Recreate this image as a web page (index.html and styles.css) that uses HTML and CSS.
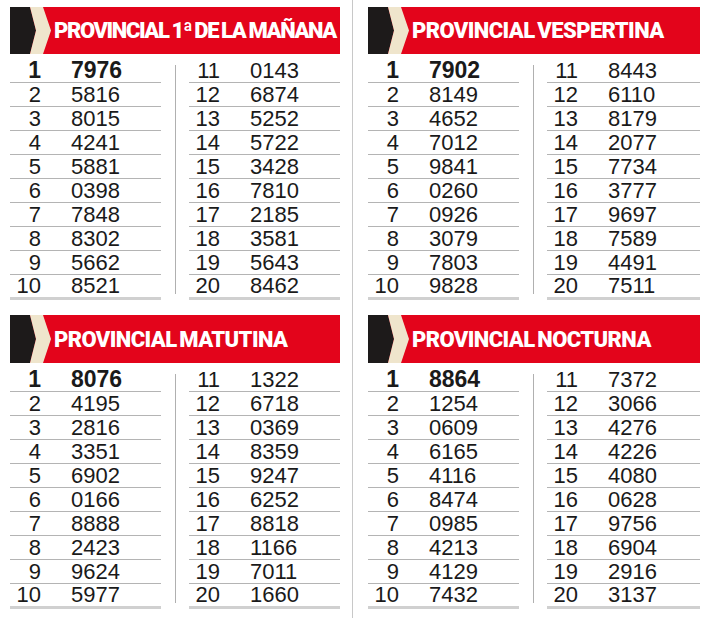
FILE: index.html
```html
<!DOCTYPE html>
<html lang="es">
<head>
<meta charset="utf-8">
<title>Quiniela Provincial</title>
<link rel="stylesheet" href="styles.css">
</head>
<body>
<div class="page">
  <div class="col col-left">
    <section class="panel">
      <div class="head">
        <svg class="chev" width="42" height="47" viewBox="0 0 42 47"><polygon points="0,0 20,0 26,23.5 20,47 0,47" fill="#1d1a1a"/><polygon points="20,0 33,0 41,23.5 33,47 20,47 26,23.5" fill="#efe5cc"/></svg>
        <h2 class="title title-tight">PROVINCIAL 1ª DE LA MAÑANA</h2>
      </div>
      <div class="table">
        <div class="sub sub-a">
          <div class="row first"><span class="rk">1</span><span class="nm">7976</span></div>
          <div class="row"><span class="rk">2</span><span class="nm">5816</span></div>
          <div class="row"><span class="rk">3</span><span class="nm">8015</span></div>
          <div class="row"><span class="rk">4</span><span class="nm">4241</span></div>
          <div class="row"><span class="rk">5</span><span class="nm">5881</span></div>
          <div class="row"><span class="rk">6</span><span class="nm">0398</span></div>
          <div class="row"><span class="rk">7</span><span class="nm">7848</span></div>
          <div class="row"><span class="rk">8</span><span class="nm">8302</span></div>
          <div class="row"><span class="rk">9</span><span class="nm">5662</span></div>
          <div class="row last"><span class="rk">10</span><span class="nm">8521</span></div>
        </div>
        <div class="vsep"></div>
        <div class="sub sub-b">
          <div class="row first"><span class="rk">11</span><span class="nm">0143</span></div>
          <div class="row"><span class="rk">12</span><span class="nm">6874</span></div>
          <div class="row"><span class="rk">13</span><span class="nm">5252</span></div>
          <div class="row"><span class="rk">14</span><span class="nm">5722</span></div>
          <div class="row"><span class="rk">15</span><span class="nm">3428</span></div>
          <div class="row"><span class="rk">16</span><span class="nm">7810</span></div>
          <div class="row"><span class="rk">17</span><span class="nm">2185</span></div>
          <div class="row"><span class="rk">18</span><span class="nm">3581</span></div>
          <div class="row"><span class="rk">19</span><span class="nm">5643</span></div>
          <div class="row last"><span class="rk">20</span><span class="nm">8462</span></div>
        </div>
      </div>
    </section>
    <section class="panel panel-low">
      <div class="head">
        <svg class="chev" width="42" height="48" viewBox="0 0 42 48"><polygon points="0,0 20,0 26,24 20,48 0,48" fill="#1d1a1a"/><polygon points="20,0 33,0 41,24 33,48 20,48 26,24" fill="#efe5cc"/></svg>
        <h2 class="title">PROVINCIAL MATUTINA</h2>
      </div>
      <div class="table">
        <div class="sub sub-a">
          <div class="row first"><span class="rk">1</span><span class="nm">8076</span></div>
          <div class="row"><span class="rk">2</span><span class="nm">4195</span></div>
          <div class="row"><span class="rk">3</span><span class="nm">2816</span></div>
          <div class="row"><span class="rk">4</span><span class="nm">3351</span></div>
          <div class="row"><span class="rk">5</span><span class="nm">6902</span></div>
          <div class="row"><span class="rk">6</span><span class="nm">0166</span></div>
          <div class="row"><span class="rk">7</span><span class="nm">8888</span></div>
          <div class="row"><span class="rk">8</span><span class="nm">2423</span></div>
          <div class="row"><span class="rk">9</span><span class="nm">9624</span></div>
          <div class="row last"><span class="rk">10</span><span class="nm">5977</span></div>
        </div>
        <div class="vsep"></div>
        <div class="sub sub-b">
          <div class="row first"><span class="rk">11</span><span class="nm">1322</span></div>
          <div class="row"><span class="rk">12</span><span class="nm">6718</span></div>
          <div class="row"><span class="rk">13</span><span class="nm">0369</span></div>
          <div class="row"><span class="rk">14</span><span class="nm">8359</span></div>
          <div class="row"><span class="rk">15</span><span class="nm">9247</span></div>
          <div class="row"><span class="rk">16</span><span class="nm">6252</span></div>
          <div class="row"><span class="rk">17</span><span class="nm">8818</span></div>
          <div class="row"><span class="rk">18</span><span class="nm">1166</span></div>
          <div class="row"><span class="rk">19</span><span class="nm">7011</span></div>
          <div class="row last"><span class="rk">20</span><span class="nm">1660</span></div>
        </div>
      </div>
    </section>
  </div>
  <div class="divider"></div>
  <div class="col col-right">
    <section class="panel">
      <div class="head">
        <svg class="chev" width="42" height="47" viewBox="0 0 42 47"><polygon points="0,0 20,0 26,23.5 20,47 0,47" fill="#1d1a1a"/><polygon points="20,0 33,0 41,23.5 33,47 20,47 26,23.5" fill="#efe5cc"/></svg>
        <h2 class="title">PROVINCIAL VESPERTINA</h2>
      </div>
      <div class="table">
        <div class="sub sub-a">
          <div class="row first"><span class="rk">1</span><span class="nm">7902</span></div>
          <div class="row"><span class="rk">2</span><span class="nm">8149</span></div>
          <div class="row"><span class="rk">3</span><span class="nm">4652</span></div>
          <div class="row"><span class="rk">4</span><span class="nm">7012</span></div>
          <div class="row"><span class="rk">5</span><span class="nm">9841</span></div>
          <div class="row"><span class="rk">6</span><span class="nm">0260</span></div>
          <div class="row"><span class="rk">7</span><span class="nm">0926</span></div>
          <div class="row"><span class="rk">8</span><span class="nm">3079</span></div>
          <div class="row"><span class="rk">9</span><span class="nm">7803</span></div>
          <div class="row last"><span class="rk">10</span><span class="nm">9828</span></div>
        </div>
        <div class="vsep"></div>
        <div class="sub sub-b">
          <div class="row first"><span class="rk">11</span><span class="nm">8443</span></div>
          <div class="row"><span class="rk">12</span><span class="nm">6110</span></div>
          <div class="row"><span class="rk">13</span><span class="nm">8179</span></div>
          <div class="row"><span class="rk">14</span><span class="nm">2077</span></div>
          <div class="row"><span class="rk">15</span><span class="nm">7734</span></div>
          <div class="row"><span class="rk">16</span><span class="nm">3777</span></div>
          <div class="row"><span class="rk">17</span><span class="nm">9697</span></div>
          <div class="row"><span class="rk">18</span><span class="nm">7589</span></div>
          <div class="row"><span class="rk">19</span><span class="nm">4491</span></div>
          <div class="row last"><span class="rk">20</span><span class="nm">7511</span></div>
        </div>
      </div>
    </section>
    <section class="panel panel-low">
      <div class="head">
        <svg class="chev" width="42" height="48" viewBox="0 0 42 48"><polygon points="0,0 20,0 26,24 20,48 0,48" fill="#1d1a1a"/><polygon points="20,0 33,0 41,24 33,48 20,48 26,24" fill="#efe5cc"/></svg>
        <h2 class="title">PROVINCIAL NOCTURNA</h2>
      </div>
      <div class="table">
        <div class="sub sub-a">
          <div class="row first"><span class="rk">1</span><span class="nm">8864</span></div>
          <div class="row"><span class="rk">2</span><span class="nm">1254</span></div>
          <div class="row"><span class="rk">3</span><span class="nm">0609</span></div>
          <div class="row"><span class="rk">4</span><span class="nm">6165</span></div>
          <div class="row"><span class="rk">5</span><span class="nm">4116</span></div>
          <div class="row"><span class="rk">6</span><span class="nm">8474</span></div>
          <div class="row"><span class="rk">7</span><span class="nm">0985</span></div>
          <div class="row"><span class="rk">8</span><span class="nm">4213</span></div>
          <div class="row"><span class="rk">9</span><span class="nm">4129</span></div>
          <div class="row last"><span class="rk">10</span><span class="nm">7432</span></div>
        </div>
        <div class="vsep"></div>
        <div class="sub sub-b">
          <div class="row first"><span class="rk">11</span><span class="nm">7372</span></div>
          <div class="row"><span class="rk">12</span><span class="nm">3066</span></div>
          <div class="row"><span class="rk">13</span><span class="nm">4276</span></div>
          <div class="row"><span class="rk">14</span><span class="nm">4226</span></div>
          <div class="row"><span class="rk">15</span><span class="nm">4080</span></div>
          <div class="row"><span class="rk">16</span><span class="nm">0628</span></div>
          <div class="row"><span class="rk">17</span><span class="nm">9756</span></div>
          <div class="row"><span class="rk">18</span><span class="nm">6904</span></div>
          <div class="row"><span class="rk">19</span><span class="nm">2916</span></div>
          <div class="row last"><span class="rk">20</span><span class="nm">3137</span></div>
        </div>
      </div>
    </section>
  </div>
</div>
</body>
</html>
```
FILE: styles.css
```css
html, body {
  margin: 0;
  padding: 0;
  background: #ffffff;
}
body {
  font-family: "Liberation Sans", "Lato", sans-serif;
  color: #1a1a1a;
}
.page {
  display: flex;
  width: 704px;
  height: 618px;
  padding-left: 10px;
  box-sizing: border-box;
  overflow: hidden;
}
.col {
  display: flex;
  flex-direction: column;
}
.col-left {
  width: 330px;
}
.col-right {
  width: 332px;
}
.divider {
  width: 1px;
  background: #c8c8c8;
  margin: 0 15px 0 12px;
}
.panel {
  margin-top: 7px;
}
.panel-low {
  margin-top: 15px;
}
.head {
  display: flex;
  align-items: center;
  height: 47px;
  background: #e3041b;
  overflow: hidden;
}
.panel-low .head {
  height: 48px;
}
.chev {
  display: block;
  flex: none;
}
.title {
  margin: 0 0 0 2px;
  font-family: "Roboto", sans-serif;
  font-weight: 900;
  font-size: 22px;
  line-height: 1;
  color: #ffffff;
  letter-spacing: -0.6px;
  word-spacing: -2px;
  padding-top: 1px;
  white-space: nowrap;
}
.title-tight {
  letter-spacing: -1.4px;
  word-spacing: -1px;
}
.table {
  display: grid;
  grid-template-columns: 151px 28px 1fr;
}
.vsep {
  justify-self: center;
  width: 1px;
  background: #b0b0b0;
  margin: 11px 0 6px;
}
.row {
  display: flex;
  align-items: flex-end;
  box-sizing: border-box;
  height: 24px;
  border-bottom: 1px solid #b4b4b4;
  font-size: 22px;
  line-height: 23px;
}
.row.first {
  height: 29px;
}
.sub-a .row.first {
  font-weight: 700;
  font-size: 23px;
}
.row.last {
  height: 25px;
  line-height: 22px;
  border-bottom: 3px solid #d0d0d0;
}
.rk {
  width: 31px;
  text-align: right;
  flex: none;
}
.nm {
  margin-left: 30px;
}
```
